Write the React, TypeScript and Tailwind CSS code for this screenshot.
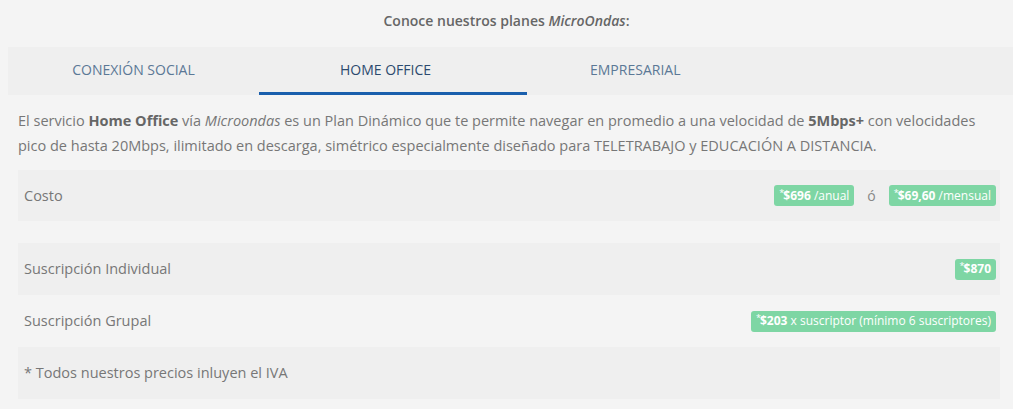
import React from "react";

const tabs = [
    { label: "CONEXIÓN SOCIAL", cls: "w-[251px] justify-center" },
    { label: "HOME OFFICE", cls: "w-[268px] pl-[81px]", active: true },
    { label: "EMPRESARIAL", cls: "w-[240px] pl-[63px]" },
];

const Badge: React.FC<{ price: string; rest?: string }> = ({ price, rest }) => (
    <span className="inline-flex items-center h-[21px] px-[5px] rounded-[3px] bg-[#7ed6a4] text-white text-[12px] leading-none">
        <sup className="text-[9px] -mr-[1px] relative -top-[3px]">*</sup>
        <b className="font-bold">{price}</b>
        {rest && <span>&nbsp;{rest}</span>}
    </span>
);

export default function App() {
    return (
        <div className="min-h-[409px] w-[1013px] bg-[#f4f4f4] text-[#777] font-['Open_Sans',sans-serif] overflow-hidden">
            <p className="h-[47px] flex items-center justify-center text-[14px] font-semibold text-[#666] pb-[6px]">
                Conoce nuestros planes&nbsp;<i>MicroOndas</i>:
            </p>

            <div className="ml-[8px] h-[48px] flex bg-[#efefef]">
                {tabs.map((t) => (
                    <div
                        key={t.label}
                        className={`${t.cls} flex items-center text-[14px] border-b-[3px] ${
                            t.active ? "border-[#1a5fad] text-[#2c4a6e]" : "border-transparent text-[#5b7896]"
                        }`}
                    >
                        {t.label}
                    </div>
                ))}
            </div>

            <p className="mx-[18px] mt-[13px] text-[14.5px] leading-[25px] text-[#777]">
                El servicio <b className="text-[#666]">Home Office</b> vía <i>Microondas</i> es un Plan Dinámico que te
                permite navegar en promedio a una velocidad de <b className="text-[#666]">5Mbps+</b> con velocidades pico de
                hasta 20Mbps, ilimitado en descarga, simétrico especialmente diseñado para TELETRABAJO y EDUCACIÓN A DISTANCIA.
            </p>

            <div className="mx-[18px] w-[982px] mt-[12px]">
                <div className="h-[51px] flex items-center justify-between px-[6px] pr-[4px] bg-[#efefef]">
                    <span className="text-[14.5px]">Costo</span>
                    <div className="flex items-center">
                        <Badge price="$696" rest="/anual" />
                        <span className="mx-[13px] text-[14px] text-[#888]">ó</span>
                        <Badge price="$69,60" rest="/mensual" />
                    </div>
                </div>

                <div className="mt-[22px] h-[52px] flex items-center justify-between px-[6px] pr-[4px] bg-[#efefef]">
                    <span className="text-[14.5px]">Suscripción Individual</span>
                    <Badge price="$870" />
                </div>
                <div className="h-[52px] flex items-center justify-between px-[6px] pr-[4px]">
                    <span className="text-[14.5px]">Suscripción Grupal</span>
                    <Badge price="$203" rest="x suscriptor (mínimo 6 suscriptores)" />
                </div>
                <div className="h-[52px] flex items-center px-[6px] bg-[#efefef]">
                    <span className="text-[14.5px]">* Todos nuestros precios inluyen el IVA</span>
                </div>
            </div>
        </div>
    );
}
